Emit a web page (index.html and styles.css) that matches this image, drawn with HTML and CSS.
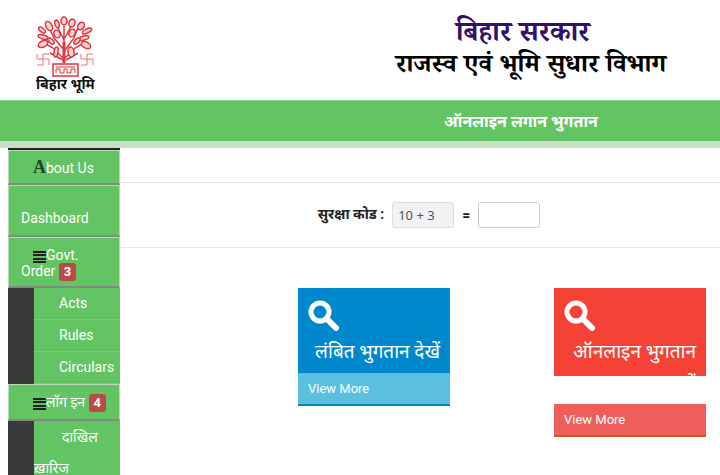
FILE: index.html
```html
<!doctype html>
<html lang="hi">
<head>
<meta charset="utf-8">
<title>ऑनलाइन लगान भुगतान</title>
<link rel="stylesheet" href="styles.css">
</head>

<body>
<header class="header">
  <div class="logo">
    <svg class="tree" viewBox="0 0 58 62" width="58" height="62" fill="none" stroke="#e0343c">
      <path d="M28 47V10M28 34L18 22 13 12M29 34l9-12 4-10M27 42L17 32 6 26M29 42l10-10 11-6M27 44L14 37M30 44l12-7M28 24l-6-12M29 22l6-12" stroke-width="1.5"/>
      <path d="M28 47V26" stroke-width="3"/>
      <g fill="#fbd0d0" stroke-width="1.5">
        <ellipse cx="28" cy="5" rx="3" ry="4"/>
        <ellipse cx="21" cy="8" rx="2" ry="4" transform="rotate(-18 21 8)"/>
        <ellipse cx="36" cy="7" rx="3" ry="4" transform="rotate(18 36 7)"/>
        <ellipse cx="13" cy="10" rx="3" ry="5" transform="rotate(-30 13 10)"/>
        <ellipse cx="45" cy="10" rx="3" ry="4" transform="rotate(35 45 10)"/>
        <ellipse cx="6" cy="14" rx="2" ry="4" transform="rotate(-50 6 14)"/>
        <ellipse cx="51" cy="15" rx="2" ry="5" transform="rotate(65 51 15)"/>
        <ellipse cx="7" cy="21" rx="2" ry="5" transform="rotate(-75 7 21)"/>
        <ellipse cx="48" cy="22" rx="2" ry="5" transform="rotate(75 48 22)"/>
        <ellipse cx="7" cy="28" rx="3" ry="5" transform="rotate(65 7 28)"/>
        <ellipse cx="50" cy="29" rx="3" ry="5" transform="rotate(-60 50 29)"/>
        <ellipse cx="21" cy="18" rx="3" ry="4" transform="rotate(-25 21 18)"/>
        <ellipse cx="36" cy="17" rx="3" ry="4" transform="rotate(25 36 17)"/>
        <ellipse cx="15" cy="25" rx="2" ry="4" transform="rotate(-45 15 25)"/>
        <ellipse cx="41" cy="25" rx="2" ry="4" transform="rotate(45 41 25)"/>
        <ellipse cx="20" cy="36" rx="2" ry="5" transform="rotate(10 20 36)"/>
        <ellipse cx="35" cy="36" rx="3" ry="5" transform="rotate(-10 35 36)"/>
      </g>
      <rect x="17" y="48" width="25" height="12" stroke-width="1.5"/>
      <path d="M20 57v-4h4v4h4v-4h3v4h4v-4h4v4M20 51h19"/>
      <path d="M7 38v11M1 43h12M1 38v5M7 38h6M13 43v6M1 49h6M51 38v11M45 43h12M45 38v5M51 38h6M57 43v6M45 49h6" stroke="#ea7272"/>
    </svg>
    <b class="logo-text">बिहार भूमि</b>
  </div>
  <div class="dept">
    <h1>बिहार सरकार</h1>
    <h2>राजस्व एवं भूमि सुधार विभाग</h2>
  </div>
</header>
<div class="banner">ऑनलाइन लगान भुगतान</div>

<div class="wrapper">
  <nav class="sidebar">
    <a class="item about" href="#"><b class="letter">A</b>bout Us</a>
    <a class="item dashboard" href="#">Dashboard</a>
    <a class="item govt" href="#"><svg class="bars" viewBox="0 0 13 12" width="13" height="12"><path d="M0 1h13M0 4h13M0 8h13M0 11h13" stroke="#222" stroke-width="2"/></svg>Govt. Order <span class="badge">3</span></a>
    <ul class="sub">
      <li><a href="#">Acts</a></li>
      <li><a href="#">Rules</a></li>
      <li><a href="#">Circulars</a></li>
    </ul>
    <a class="item login" href="#"><svg class="bars" viewBox="0 0 13 12" width="13" height="12"><path d="M0 1h13M0 4h13M0 8h13M0 11h13" stroke="#222" stroke-width="2"/></svg>लॉग इन <span class="badge">4</span></a>
    <ul class="sub">
      <li class="wrap"><a href="#">दाखिल ख़ारिज</a></li>
    </ul>
  </nav>

  <main class="content">
    <form class="captcha">
      <label for="code">सुरक्षा कोड :</label>
      <input type="text" id="code" value="10 + 3" readonly>
      <label for="answer">=</label>
      <input type="text" id="answer">
    </form>
    <div class="cards">
      <section class="card blue">
        <div class="card-top">
          <svg class="search" viewBox="0 0 32 32" width="32" height="32" fill="none" stroke="#fff"><circle cx="12" cy="12" r="9" stroke-width="5"/><path d="M19 19l9 9" stroke-width="6" stroke-linecap="round"/></svg>
          <p>लंबित भुगतान देखें</p>
        </div>
        <a class="more" href="#">View More</a>
      </section>
      <section class="card red">
        <div class="card-top">
          <svg class="search" viewBox="0 0 32 32" width="32" height="32" fill="none" stroke="#fff"><circle cx="12" cy="12" r="9" stroke-width="5"/><path d="M19 19l9 9" stroke-width="6" stroke-linecap="round"/></svg>
          <p>ऑनलाइन भुगतान करें</p>
        </div>
        <a class="more" href="#">View More</a>
      </section>
    </div>
  </main>
</div>
</body>
</html>
```
FILE: styles.css
```css
* {
	box-sizing: border-box;
}
body {
	margin: 0;
	background: #fff;
	color: #222;
	font-family: Roboto, "Noto Sans Devanagari", "Noto Sans", sans-serif;
	font-size: 14px;
}
a {
	color: #fff;
	text-decoration: none;
}
.header {
	display: flex;
	justify-content: space-between;
	height: 100px;
	padding: 16px 54px 0 36px;
}
.logo {
	display: flex;
	flex-direction: column;
	align-items: center;
}
.logo-text {
	font-size: 14px;
	line-height: 12px;
	color: #111;
}
.dept {
	padding-top: 5px;
	text-align: center;
	font-family: "Noto Serif Devanagari", "Noto Sans Devanagari", serif;
}
.dept h1 {
	margin: 0;
	padding-right: 16px;
	font-size: 28px;
	line-height: 32px;
	font-weight: bold;
	color: #32106b;
}
.dept h2 {
	margin: 0;
	font-size: 26px;
	line-height: 30px;
	font-weight: bold;
	color: #000;
}
.banner {
	height: 48px;
	padding-left: 322px;
	background: #62c462;
	border-top: 1px solid #8bd28b;
	border-bottom: 7px solid #c6dfc6;
	color: #fff;
	font-size: 16px;
	font-weight: bold;
	line-height: 42px;
	text-align: center;
}
.wrapper {
	display: flex;
	align-items: flex-start;
}
.sidebar {
	width: 112px;
	margin-left: 8px;
	flex: none;
	background: #3a3a3a;
	border-top: 2px solid #222;
}
.item {
	display: block;
	background: #62c462;
	border: 1px solid #bcd9bc;
	border-bottom: 2px solid #808a80;
	padding: 8px 12px;
	line-height: 16px;
}
.about {
	padding: 9px 24px 7px;
}
.letter {
	color: #244524;
	font-family: "Liberation Serif", serif;
	font-size: 18px;
	line-height: 12px;
}
.dashboard {
	padding: 24px 12px 9px;
}
.govt {
	padding: 9px 12px 7px;
}
.govt, .login {
	text-indent: 12px;
}
.login {
	padding: 9px 12px;
}
.bars {
	margin: -2px 0;
	vertical-align: -1px;
}
.badge {
	display: inline-block;
	margin: -2px 0;
	padding: 0 5px;
	border-radius: 3px;
	background: #b94a48;
	font-size: 13px;
	font-weight: bold;
	line-height: 18px;
	text-indent: 0;
}
.sub {
	margin: 0 0 0 26px;
	padding: 0;
	list-style: none;
	background: #62c462;
}
.sub li {
	padding-left: 25px;
	line-height: 31px;
	border-bottom: 1px dotted #8fd08f;
}
.sub .wrap {
	padding: 1px 20px 0 0;
	text-indent: 28px;
	border: 0;
}
.content {
	flex: 1;
}
.captcha {
	display: flex;
	justify-content: center;
	align-items: center;
	gap: 8px;
	height: 66px;
	margin: 34px 0 0;
	padding-left: 18px;
	border-top: 1px solid #e8e8e8;
	border-bottom: 1px solid #e8e8e8;
}
.captcha label {
	font-weight: bold;
}
.captcha input {
	width: 62px;
	height: 26px;
	padding: 0 5px;
	border: 1px solid #ccc;
	border-radius: 3px;
	color: #555;
	font-family: "Noto Sans", sans-serif;
	font-size: 13px;
}
.captcha input[readonly] {
	background: #f2f2f2;
	border-color: #ddd;
}
.cards {
	display: grid;
	grid-template-columns: 1fr 1fr;
	gap: 104px;
	align-items: start;
	padding: 40px 14px 20px 178px;
}
.card-top {
	height: 85px;
	padding: 12px 10px 0;
	color: #fff;
	overflow: hidden;
}
.search {
	display: block;
}
.card p {
	margin: 4px 0 0;
	font-size: 19px;
	line-height: 32px;
	text-align: right;
}
.more {
	display: block;
	padding: 0 10px;
	font-size: 13px;
	line-height: 31px;
}
.blue .card-top {
	background: #0088cc;
}
.blue .more {
	background: #5bc0de;
	border-bottom: 2px solid #0088b8;
}
.red .card-top {
	height: 88px;
	background: #f44336;
}
.red .more {
	margin-top: 28px;
	background: #ee5f5b;
	border-bottom: 2px solid #c45c1c;
}
```
